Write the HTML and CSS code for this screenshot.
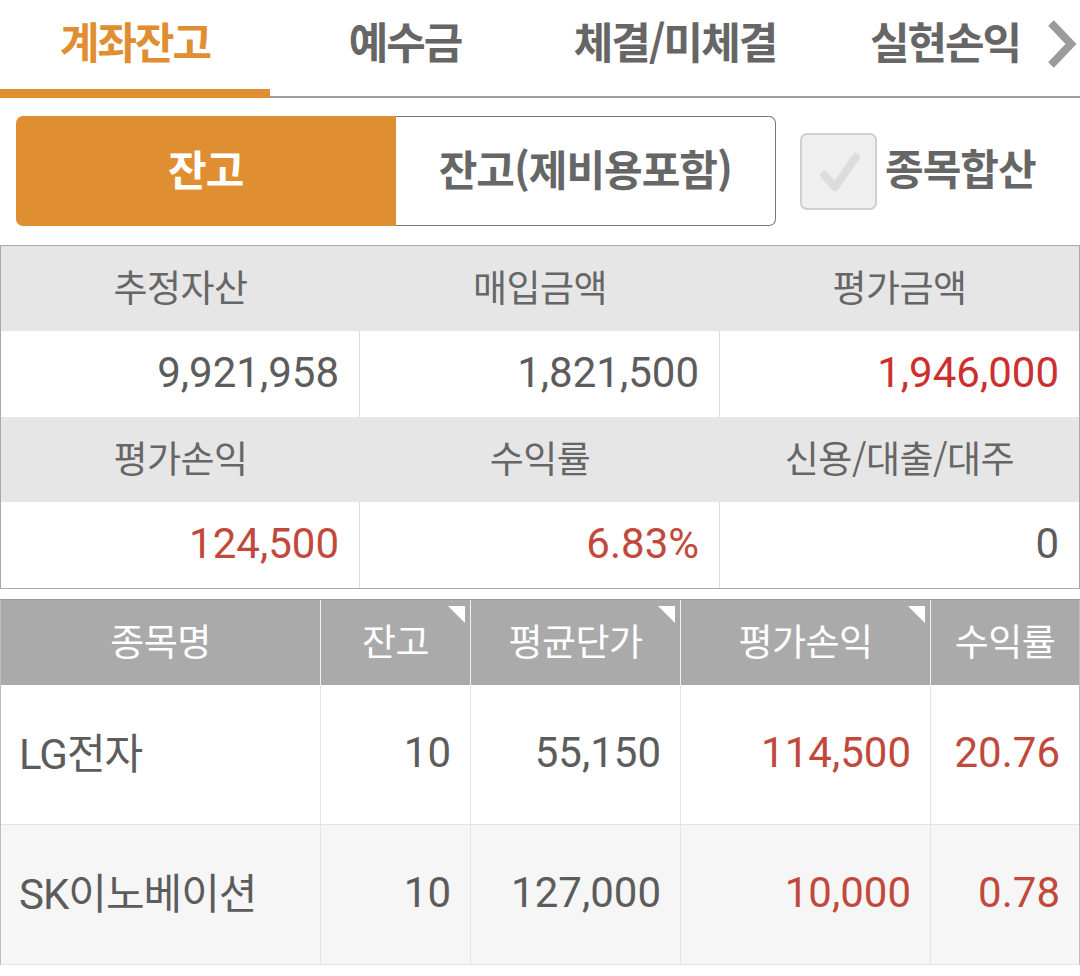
FILE: index.html
```html
<!DOCTYPE html>
<html lang="ko">
<head>
<meta charset="utf-8">
<title>계좌잔고</title>
<link rel="stylesheet" href="styles.css">
</head>
<body>
<nav class="tabs">
  <div class="tab active">계좌잔고</div>
  <div class="tab">예수금</div>
  <div class="tab">체결/미체결</div>
  <div class="tab">실현손익</div>
  <svg class="chev" width="32" height="50" viewBox="0 0 32 50"><polyline points="5,4 25,25 5,46" fill="none" stroke="#9b9b9b" stroke-width="8"/></svg>
</nav>

<div class="controls">
  <div class="segment">
    <div class="seg on">잔고</div>
    <div class="seg">잔고(제비용포함)</div>
  </div>
  <div class="check">
    <svg width="77" height="77" viewBox="0 0 77 77"><polyline points="24,42 35,54 56,24" fill="none" stroke="#dcdcdc" stroke-width="8" stroke-linecap="round" stroke-linejoin="round"/></svg>
  </div>
  <div class="check-label">종목합산</div>
</div>

<section class="summary">
  <div class="lbl">추정자산</div>
  <div class="lbl">매입금액</div>
  <div class="lbl">평가금액</div>
  <div class="val">9,921,958</div>
  <div class="val">1,821,500</div>
  <div class="val red">1,946,000</div>
  <div class="lbl">평가손익</div>
  <div class="lbl">수익률</div>
  <div class="lbl">신용/대출/대주</div>
  <div class="val brick">124,500</div>
  <div class="val brick">6.83%</div>
  <div class="val">0</div>
</section>

<section class="stocks">
  <div class="th">종목명</div>
  <div class="th sort">잔고</div>
  <div class="th sort">평균단가</div>
  <div class="th sort">평가손익</div>
  <div class="th">수익률</div>

  <div class="td name">LG전자</div>
  <div class="td">10</div>
  <div class="td">55,150</div>
  <div class="td brick">114,500</div>
  <div class="td brick">20.76</div>

  <div class="td name alt">SK이노베이션</div>
  <div class="td alt">10</div>
  <div class="td alt">127,000</div>
  <div class="td alt brick">10,000</div>
  <div class="td alt brick">0.78</div>
</section>
</body>
</html>
```

FILE: styles.css
```css
* { box-sizing: border-box; }
html, body { margin: 0; padding: 0; background: #fff; }
body {
  width: 1080px;
  font-family: "Roboto", "Noto Sans CJK KR", sans-serif;
  color: #5c5c5c;
}

/* Tabs */
.tabs {
  position: relative;
  display: flex;
  height: 98px;
  border-bottom: 2px solid #9d9d9d;
}
.tab {
  width: 270px;
  height: 98px;
  margin-bottom: -2px;
  padding-top: 13px;
  text-align: center;
  font-family: "Noto Sans CJK KR", sans-serif;
  font-weight: 700;
  font-size: 43px;
  line-height: 54px;
  letter-spacing: -2px;
  color: #666;
}
.tab.active {
  color: #df8f32;
  border-bottom: 9px solid #df8f32;
}
.chev {
  position: absolute;
  right: 2px;
  top: 19px;
}

/* Segmented control */
.controls {
  display: flex;
  align-items: center;
  margin-top: 18px;
  padding-left: 16px;
}
.segment {
  display: flex;
  width: 760px;
  height: 110px;
}
.seg {
  flex: 1;
  display: flex;
  align-items: center;
  justify-content: center;
  font-family: "Noto Sans CJK KR", sans-serif;
  font-weight: 700;
  font-size: 42px;
  letter-spacing: -1px;
  color: #666;
  border: 1px solid #777;
  border-left: none;
  border-radius: 0 7px 7px 0;
  padding-bottom: 8px;
}
.seg.on {
  background: #df8f32;
  color: #fff;
  border: none;
  border-radius: 7px 0 0 7px;
}
.check {
  width: 77px;
  height: 77px;
  margin-left: 24px;
  background: #efefef;
  border: 2px solid #cfcfcf;
  border-radius: 7px;
}
.check svg { display: block; margin: -2px; }
.check-label {
  margin-left: 8px;
  font-family: "Noto Sans CJK KR", sans-serif;
  font-weight: 700;
  font-size: 42px;
  letter-spacing: -1px;
  color: #666;
  padding-bottom: 10px;
}

/* Summary grid */
.summary {
  display: grid;
  grid-template-columns: 359px 360px 1fr;
  grid-template-rows: 85px 86px 85px 86px;
  margin-top: 19px;
  border: 1px solid #a9a9a9;
}
.lbl {
  background: #e6e6e6;
  display: flex;
  align-items: center;
  justify-content: center;
  font-family: "Noto Sans CJK KR", sans-serif;
  font-size: 37px;
  letter-spacing: -0.5px;
  color: #666;
  padding-bottom: 6px;
}
.val {
  display: flex;
  align-items: center;
  justify-content: flex-end;
  padding-right: 20px;
  font-size: 42px;
  color: #5c5c5c;
  border-right: 1px solid #dedede;
  padding-bottom: 3px;
}
.val:nth-child(6), .val:nth-child(12) { border-right: none; }
.red { color: #cc2f2f !important; }
.brick { color: #c1493b !important; }

/* Stock table */
.stocks {
  display: grid;
  grid-template-columns: 320px 150px 210px 250px 1fr;
  grid-template-rows: 85px 140px 140px;
  margin-top: 10px;
  border-top: 1px solid #9a9a9a;
  border-left: 1px solid #bdbdbd;
  border-right: 1px solid #bdbdbd;
}
.th {
  position: relative;
  background: #aaaaaa;
  color: #fff;
  display: flex;
  align-items: center;
  justify-content: center;
  font-family: "Noto Sans CJK KR", sans-serif;
  font-size: 37px;
  letter-spacing: -0.5px;
  border-right: 1px solid #f2f2f2;
  padding-bottom: 6px;
}
.th:nth-child(5) { border-right: none; }
.th.sort::after {
  content: "";
  position: absolute;
  top: 6px;
  right: 5px;
  border-top: 17px solid #fff;
  border-left: 17px solid transparent;
}
.td {
  display: flex;
  align-items: center;
  justify-content: flex-end;
  padding-right: 19px;
  font-size: 42px;
  color: #5c5c5c;
  border-right: 1px solid #e4e4e4;
  border-bottom: 1px solid #e4e4e4;
  background: #fff;
  padding-bottom: 4px;
}
.td:nth-child(5n) { border-right: none; }
.td.name {
  justify-content: flex-start;
  padding-left: 18px;
  padding-right: 0;
  font-size: 42px;
  letter-spacing: -1px;
  padding-bottom: 8px;
}
.td.alt { background: #f6f6f6; }
```
